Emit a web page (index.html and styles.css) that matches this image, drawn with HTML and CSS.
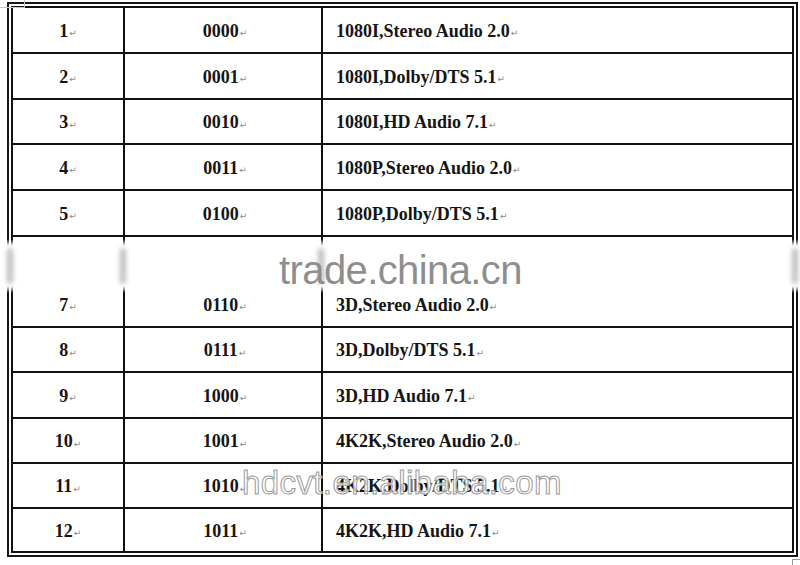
FILE: index.html
```html
<!DOCTYPE html>
<html>
<head>
<meta charset="utf-8">
<link rel="stylesheet" href="styles.css">
</head>
<body>
<div class="page">
  <div class="frame">
    <div class="tbl">
      <div class="c c1">1<span class="pm">↵</span></div><div class="c c2">0000<span class="pm">↵</span></div><div class="c c3">1080I,Stereo Audio 2.0<span class="pm">↵</span></div>
      <div class="c c1">2<span class="pm">↵</span></div><div class="c c2">0001<span class="pm">↵</span></div><div class="c c3">1080I,Dolby/DTS 5.1<span class="pm">↵</span></div>
      <div class="c c1">3<span class="pm">↵</span></div><div class="c c2">0010<span class="pm">↵</span></div><div class="c c3">1080I,HD Audio 7.1<span class="pm">↵</span></div>
      <div class="c c1">4<span class="pm">↵</span></div><div class="c c2">0011<span class="pm">↵</span></div><div class="c c3">1080P,Stereo Audio 2.0<span class="pm">↵</span></div>
      <div class="c c1">5<span class="pm">↵</span></div><div class="c c2">0100<span class="pm">↵</span></div><div class="c c3">1080P,Dolby/DTS 5.1<span class="pm">↵</span></div>
      <div class="c c1">6<span class="pm">↵</span></div><div class="c c2">0101<span class="pm">↵</span></div><div class="c c3">1080P,HD Audio 7.1<span class="pm">↵</span></div>
      <div class="c c1">7<span class="pm">↵</span></div><div class="c c2">0110<span class="pm">↵</span></div><div class="c c3">3D,Stereo Audio 2.0<span class="pm">↵</span></div>
      <div class="c c1">8<span class="pm">↵</span></div><div class="c c2">0111<span class="pm">↵</span></div><div class="c c3">3D,Dolby/DTS 5.1<span class="pm">↵</span></div>
      <div class="c c1">9<span class="pm">↵</span></div><div class="c c2">1000<span class="pm">↵</span></div><div class="c c3">3D,HD Audio 7.1<span class="pm">↵</span></div>
      <div class="c c1">10<span class="pm">↵</span></div><div class="c c2">1001<span class="pm">↵</span></div><div class="c c3">4K2K,Stereo Audio 2.0<span class="pm">↵</span></div>
      <div class="c c1">11<span class="pm">↵</span></div><div class="c c2">1010<span class="pm">↵</span></div><div class="c c3">4K2K,Dolby/DTS 5.1<span class="pm">↵</span></div>
      <div class="c c1">12<span class="pm">↵</span></div><div class="c c2">1011<span class="pm">↵</span></div><div class="c c3">4K2K,HD Audio 7.1<span class="pm">↵</span></div>
    </div>
  </div>

  <div class="mark-tl"></div>
  <div class="mark-br"></div>

  <div class="band">
    <span class="smudge s1"></span>
    <span class="smudge s2"></span>
    <span class="smudge s3"></span>
    <span class="smudge s4"></span>
    <span class="wm1">trade.china.cn</span>
  </div>
  <div class="wm2">hdcvt.en.alibaba.com</div>
</div>
</body>
</html>
```

FILE: styles.css
```css
html, body {
  margin: 0;
  padding: 0;
  background: #fff;
}

.page {
  position: relative;
  width: 800px;
  height: 565px;
  overflow: hidden;
}

.frame {
  margin: 2px 0 0 7px;
  width: 791px;
  box-sizing: border-box;
  border: 2px solid #161616;
  padding: 2px;
}

.tbl {
  display: grid;
  grid-template-columns: 110px 196px 469px;
  grid-template-rows: 44px 44px 43px 44px 44px 43px 44px 43px 44px 43px 43px 42px;
  gap: 2px;
  background: #111;
  border: 2px solid #111;
}

.c {
  background: #fff;
  display: flex;
  align-items: center;
  padding-top: 2px;
  box-sizing: border-box;
  font-family: "Liberation Serif", "Times New Roman", serif;
  font-weight: bold;
  font-size: 18px;
  color: #151515;
  white-space: nowrap;
}

.c1, .c2 {
  justify-content: center;
}

.c2 {
  padding-left: 4px;
}

.c3 {
  padding-left: 13px;
}

.pm {
  font-family: "DejaVu Sans", sans-serif;
  font-weight: normal;
  font-size: 9px;
  color: #8a8a8a;
  margin-left: 1px;
  position: relative;
  top: 2px;
}

.mark-tl {
  position: absolute;
  left: 0;
  top: 0;
  width: 24px;
  height: 7px;
  border-right: 1px solid #c8c8c8;
  border-bottom: 1px solid #c8c8c8;
}

.mark-br {
  position: absolute;
  left: 792px;
  top: 559px;
  width: 10px;
  height: 10px;
  border-left: 1px solid #999;
  border-top: 1px solid #999;
}

.band {
  position: absolute;
  left: 0;
  top: 239px;
  width: 800px;
  height: 54px;
  background: linear-gradient(to bottom,
    rgba(255,255,255,0) 0,
    #fff 7px,
    #fff 47px,
    rgba(255,255,255,0) 54px);
}

.smudge {
  position: absolute;
  top: 9px;
  width: 6px;
  height: 36px;
  background: #bdbdbd;
  border-radius: 3px;
  filter: blur(2.5px);
}

.s1 { left: 7px; }
.s2 { left: 120px; }
.s3 { left: 318px; }
.s4 { left: 792px; }

.wm1 {
  position: absolute;
  left: 279px;
  top: 8px;
  font-family: "Liberation Sans", Arial, sans-serif;
  font-size: 40px;
  line-height: 46px;
  letter-spacing: -0.6px;
  color: #8e8e8e;
}

.wm2 {
  position: absolute;
  left: 242px;
  top: 464px;
  font-family: "Liberation Sans", Arial, sans-serif;
  font-size: 33px;
  line-height: 38px;
  letter-spacing: 0.4px;
  color: rgba(255,255,255,0.8);
  -webkit-text-stroke: 1px #9a9a9a;
}
```
